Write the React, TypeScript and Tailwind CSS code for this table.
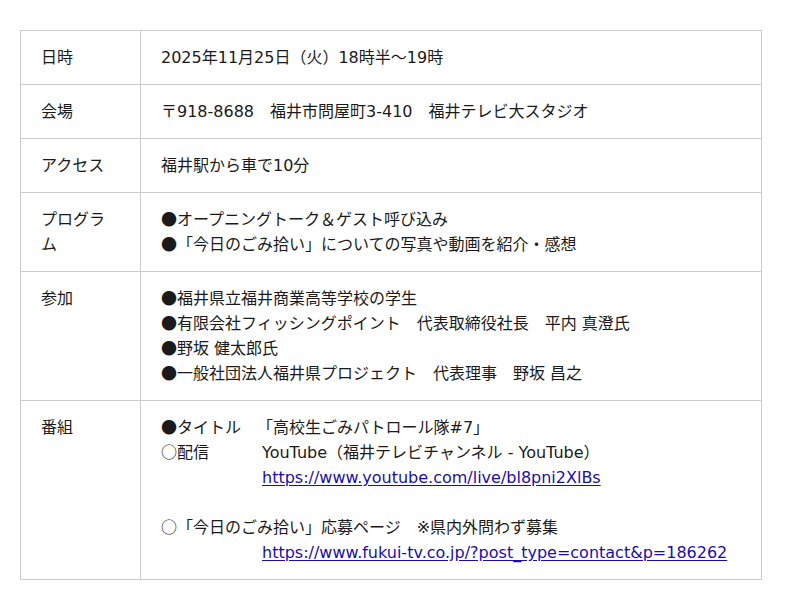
const font = '"DejaVu Sans", "Noto Sans CJK JP", sans-serif'
const cjk = '[font-family:"Noto_Sans_CJK_JP",sans-serif] leading-[16px]'

const linkCls = 'text-[#1a0dab] underline underline-offset-2'

function Mark({ c }: { c: string }) {
  return <span className={cjk}>{c}</span>
}

function Row({ label, children }: { label: React.ReactNode; children: React.ReactNode }) {
  return (
    <tr>
      <th className="w-[120px] border border-[#cccccc] px-5 py-[14px] text-left align-top font-normal">
        {label}
      </th>
      <td className="border border-[#cccccc] px-5 py-[14px] align-top">{children}</td>
    </tr>
  )
}

export default function App() {
  return (
    <div className="min-h-[610px] bg-white pt-[30px] pl-5" style={{ fontFamily: font }}>
      <table className="w-[742px] table-fixed border-collapse text-[16px] leading-[25px] text-[#1a1a1a]">
        <tbody>
          <Row label="日時">2025年11月25日（火）18時半～19時</Row>
          <Row label="会場">〒918-8688　福井市問屋町3-410　福井テレビ大スタジオ</Row>
          <Row label="アクセス">福井駅から車で10分</Row>
          <Row label="プログラム">
            <div><Mark c="●" />オープニングトーク＆ゲスト呼び込み</div>
            <div><Mark c="●" />「今日のごみ拾い」についての写真や動画を紹介・感想</div>
          </Row>
          <Row label="参加">
            <div><Mark c="●" />福井県立福井商業高等学校の学生</div>
            <div><Mark c="●" />有限会社フィッシングポイント　代表取締役社長　平内 真澄氏</div>
            <div><Mark c="●" />野坂 健太郎氏</div>
            <div><Mark c="●" />一般社団法人福井県プロジェクト　代表理事　野坂 昌之</div>
          </Row>
          <Row label="番組">
            <div className="grid grid-cols-[96px_1fr]">
              <div><Mark c="●" />タイトル</div>
              <div>「高校生ごみパトロール隊#7」</div>
            </div>
            <div className="grid grid-cols-[101px_1fr]">
              <div><Mark c="○" />配信</div>
              <div>YouTube（福井テレビチャンネル - YouTube）</div>
              <div />
              <div>
                <a className={linkCls} href="#">https://www.youtube.com/live/bl8pni2XlBs</a>
              </div>
              <div className="col-span-2 h-[25px]" />
              <div className="col-span-2"><Mark c="○" />「今日のごみ拾い」応募ページ　※県内外問わず募集</div>
              <div />
              <div>
                <a className={linkCls} href="#">https://www.fukui-tv.co.jp/?post_type=contact&amp;p=186262</a>
              </div>
            </div>
          </Row>
        </tbody>
      </table>
    </div>
  )
}
